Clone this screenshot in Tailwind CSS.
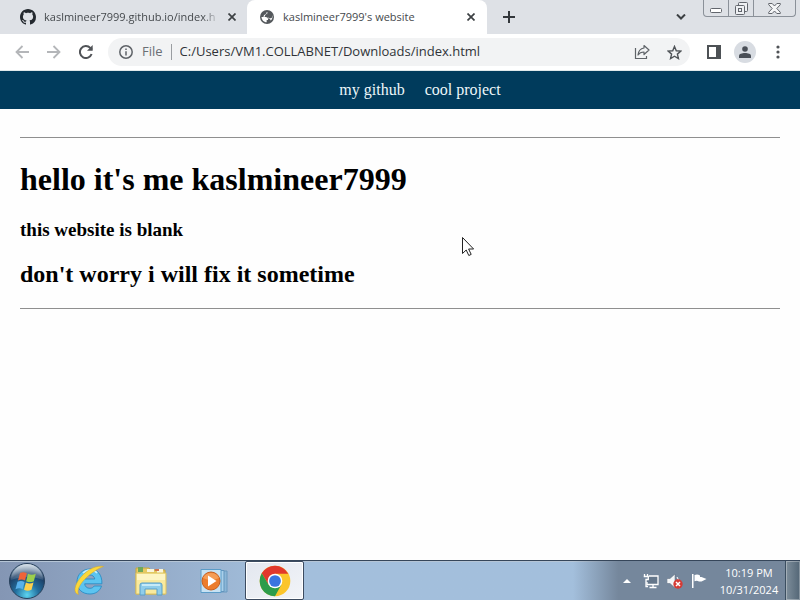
<!DOCTYPE html>
<html lang="en">
<head>
<meta charset="utf-8">
<meta name="viewport" content="width=device-width, initial-scale=1">
<title>kaslmineer7999's website</title>
<script src="https://cdn.jsdelivr.net/npm/@tailwindcss/browser@4"></script>
</head>
<body class="flex h-screen flex-col overflow-hidden bg-[#fefefe] font-['Open_Sans','Noto_Sans',sans-serif]">

<!-- Tab strip -->
<header class="flex h-[34px] shrink-0 bg-[#dee1e6] text-[11px] text-[#45494d]">
  <div class="flex w-[247px] items-center pr-[7px] pl-5">
    <svg class="size-4 shrink-0" viewBox="0 0 16 16" fill="#24292f" aria-hidden="true"><path d="M8 0C3.58 0 0 3.58 0 8c0 3.54 2.29 6.53 5.47 7.59.4.07.55-.17.55-.38 0-.19-.01-.82-.01-1.49-2.01.37-2.53-.49-2.69-.94-.09-.23-.48-.94-.82-1.13-.28-.15-.68-.52-.01-.53.63-.01 1.08.58 1.23.82.72 1.21 1.87.87 2.33.66.07-.52.28-.87.51-1.07-1.78-.2-3.64-.89-3.64-3.95 0-.87.31-1.59.82-2.15-.08-.2-.36-1.02.08-2.12 0 0 .67-.21 2.2.82.64-.18 1.32-.27 2-.27s1.36.09 2 .27c1.53-1.04 2.2-.82 2.2-.82.44 1.1.16 1.92.08 2.12.51.56.82 1.27.82 2.15 0 3.07-1.87 3.75-3.65 3.95.29.25.54.73.54 1.48 0 1.07-.01 1.93-.01 2.2 0 .21.15.46.55.38A8.01 8.01 0 0 0 16 8c0-4.42-3.58-8-8-8z"/></svg>
    <span class="ml-2 w-44 whitespace-nowrap mask-r-from-90% mask-r-to-100%">kaslmineer7999.github.io/index.h</span>
    <button class="ml-1 flex size-4 items-center justify-center" aria-label="Close tab"><svg class="size-2" viewBox="0 0 8 8" stroke="#3c4043" stroke-width="1.7"><path d="M.5.5l7 7M7.5.5l-7 7"/></svg></button>
  </div>
  <div class="flex w-[240px] items-center rounded-t-lg bg-white pr-2 pl-3">
    <svg class="size-4 shrink-0" viewBox="0 0 24 24" aria-hidden="true"><circle cx="12" cy="12" r="10.500" fill="#54585c"/><path d="M13 4.500c-2 .5-3 2-2.500 3.500-2 .3-3.500 1.500-4 3.500l3.500.5c2 .3 3.500 1 3.500 3v1.500h-2v3.500c-4.500-.3-7.500-3.800-7.800-8L8 12M13 4.500c.8 2 2 3.500 3.800 3.300 1 1.500 2.200 2 3.500 2.200.3 3-.8 5.500-2.800 7.300-.5-2.300-2-3.300-4-3.300" fill="#fff"/><path d="M13 4.500c1 2.500 0 4-2 4.500s-2.500 2-1 2.800c1.500.8 3 .2 4.300 1.400 1.500 1.300 3.700 1 5.700-1V8.500L17 4z" fill="#54585c"/></svg>
    <span class="ml-2 grow whitespace-nowrap">kaslmineer7999's website</span>
    <button class="flex size-4 items-center justify-center" aria-label="Close tab"><svg class="size-2" viewBox="0 0 8 8" stroke="#3c4043" stroke-width="1.7"><path d="M.5.5l7 7M7.5.5l-7 7"/></svg></button>
  </div>
  <button class="ml-3 flex w-5 items-center justify-center" aria-label="New tab"><svg class="size-3" viewBox="0 0 12 12" stroke="#33373b" stroke-width="2"><path d="M6 0v12M0 6h12"/></svg></button>
  <button class="ml-auto flex w-5 items-center justify-center" aria-label="Search tabs"><svg class="w-[10px]" viewBox="0 0 10 6" fill="none" stroke="#3c4043" stroke-width="2"><path d="M1 .5l4 4 4-4"/></svg></button>
  <div class="mr-1 ml-3 flex h-[17px] rounded-b border border-t-0 border-[#8b9199]">
    <button class="flex w-6 items-center justify-center pt-1" aria-label="Minimize"><svg class="h-[5px] w-3" viewBox="0 0 12 5" fill="#fff" stroke="#62666d"><rect x=".5" y=".5" width="11" height="4" rx="1"/></svg></button>
    <button class="flex w-[26px] items-center justify-center border-x border-[#8b9199]" aria-label="Restore"><svg class="size-[13px]" viewBox="0 0 13 13" fill="#eef0f3" stroke="#62666d"><rect x="3.500" y=".5" width="9" height="9" rx="1"/><rect x=".5" y="3.500" width="9" height="9" rx="1"/><rect x="3.500" y="6.500" width="3" height="3"/></svg></button>
    <button class="flex w-[41px] items-center justify-center" aria-label="Close window"><svg class="h-[11px] w-[13px]" viewBox="0 0 13 11" fill="#f4f5f7" stroke="#62666d"><path d="M.7.5h3.500L6.500 3 8.800.5h3.500v1.200L8.800 5.500l3.500 3.800v1.200H8.800L6.500 8l-2.300 2.500H.7V9.300l3.500-3.800L.7 1.700z"/></svg></button>
  </div>
</header>

<!-- Toolbar -->
<div class="flex h-[37px] shrink-0 items-center border-b border-[#dfe8ea] bg-white pr-3 pl-3 text-[#5f6368]">
  <button class="flex size-5 items-center justify-center" aria-label="Back"><svg class="size-[14px]" viewBox="0 0 14 14" fill="none" stroke="#b4b6b9" stroke-width="1.800"><path d="M14 7H1.500M7.500 1l-6 6 6 6"/></svg></button>
  <button class="ml-3 flex size-5 items-center justify-center" aria-label="Forward"><svg class="size-[14px]" viewBox="0 0 14 14" fill="none" stroke="#b4b6b9" stroke-width="1.800"><path d="M0 7h12.500M6.500 1l6 6-6 6"/></svg></button>
  <button class="ml-3 flex size-5 items-center justify-center" aria-label="Reload"><svg class="size-[14px]" viewBox="0 0 14 14" fill="none" stroke="#505357" stroke-width="2"><path d="M12.600 9A6 6 0 1 1 11.300 2.900L13 4.600"/><path d="M13.700 0v5.700H8z" fill="#505357" stroke="none"/></svg></button>
  <div class="ml-3 flex h-7 grow items-center rounded-full bg-[#f2f3f4] pr-[6px] pl-[11px] text-[13px]">
    <svg class="size-[14px] shrink-0" viewBox="0 0 14 14" fill="none" stroke="#5f6368" stroke-width="1.500" aria-hidden="true"><circle cx="7" cy="7" r="6.200"/><path d="M7 6.200v4.300M7 3.500v1.600"/></svg>
    <span class="ml-[9px] text-[#6b6f74]">File</span>
    <span class="mx-2 h-4 w-px bg-[#9a9da1]"></span>
    <input class="min-w-0 grow bg-transparent text-[#303338] outline-none" aria-label="Address" value="C:/Users/VM1.COLLABNET/Downloads/index.html">
    <button class="flex size-5 items-center justify-center" aria-label="Share"><svg class="size-4" viewBox="0 0 16 16" fill="none" stroke="#5f6368" stroke-width="1.200"><path d="M1.500 4v10.500h11V12"/><path d="M10 1.500l5 4.500-5 4.500V8C7.300 8 5.300 9 4 11c.3-3.600 2.500-6.400 6-7z" stroke-linejoin="round"/></svg></button>
    <button class="ml-3 flex size-5 items-center justify-center" aria-label="Bookmark this page"><svg class="size-[15px]" viewBox="0 0 16 16" fill="none" stroke="#505458" stroke-width="1.500"><path d="M8 1.500l1.900 4.600 4.900.4-3.700 3.200 1.100 4.800L8 12l-4.200 2.500 1.100-4.800L1.200 6.500l4.900-.4z"/></svg></button>
  </div>
  <button class="ml-3 flex size-6 items-center justify-center" aria-label="Side panel"><svg class="size-[14px]" viewBox="0 0 14 14" fill="none" stroke="#4d5155" stroke-width="2"><path d="M1 1h12v12H1z"/><path d="M10 1h3v12h-3z" fill="#4d5155"/></svg></button>
  <button class="ml-2 flex size-[22px] items-center justify-center rounded-full bg-[#d8dce2]" aria-label="Profile"><svg class="size-3" viewBox="0 0 12 12" fill="#4a4f57"><circle cx="6" cy="3" r="2.800"/><path d="M0 12V9.800C0 8 3 7 6 7s6 1 6 2.800V12z"/></svg></button>
  <button class="ml-3 flex w-5 items-center justify-center" aria-label="Menu"><svg class="h-[14px] w-1" viewBox="0 0 4 14" fill="#505357"><circle cx="2" cy="2" r="1.600"/><circle cx="2" cy="7" r="1.600"/><circle cx="2" cy="12" r="1.600"/></svg></button>
</div>

<!-- Web page -->
<main class="grow font-['Liberation_Serif',serif] text-black">
  <nav class="flex h-[38px] items-center justify-center gap-5 bg-[#003b5c] pl-10 text-base text-[#edf7fa]">
    <a href="#">my github</a>
    <a href="#">cool project</a>
  </nav>
  <div class="px-5 pt-7">
    <hr class="border-[#8f8f8f]">
    <h1 class="mt-[22px] text-[32px]/[38px] font-bold">hello it's me kaslmineer7999</h1>
    <h3 class="mt-5 text-[19px]/[24px] font-bold">this website is blank</h3>
    <h2 class="mt-[18px] text-2xl/[28px] font-bold">don't worry i will fix it sometime</h2>
    <hr class="mt-5 border-[#8f8f8f]">
  </div>
</main>

<!-- Mouse pointer -->
<svg class="absolute top-[236px] left-[461px] h-[21px] w-[14px]" viewBox="0 0 14 21" fill="#fff" stroke="#222" aria-hidden="true"><path d="M1.500 1.500v16l3.700-3.500 2.600 5.500 2.400-1.100-2.600-5.400h5z"/></svg>

<!-- Taskbar -->
<footer class="flex h-10 shrink-0 border-t border-[#36465a] bg-linear-to-r from-[#8496b4] via-[#a3bfdc] via-35% to-[#a3bfdc] inset-shadow-[0_1px_0_#b5c5d6]">
  <button class="flex w-[54px] items-center justify-center" aria-label="Start">
    <svg class="size-[38px]" viewBox="0 0 38 38">
      <defs>
        <radialGradient id="orb" cx=".5" cy=".9" r=".85"><stop offset="0" stop-color="#5cd4f0"/><stop offset=".4" stop-color="#226e9d"/><stop offset=".75" stop-color="#1d3f66"/><stop offset="1" stop-color="#8fa9c0"/></radialGradient>
        <linearGradient id="gloss" x2="0" y2="1"><stop stop-color="#fff" stop-opacity=".6"/><stop offset="1" stop-color="#fff" stop-opacity=".1"/></linearGradient>
      </defs>
      <circle cx="19" cy="19" r="17.500" fill="url(#orb)" stroke="#28415c"/>
      <path d="M3 18a16 16 0 0 1 32 0c-9-4-21-4-32 0z" fill="url(#gloss)"/>
      <path d="M12 11c2.500-1.300 4.500-1 6.800.2L17 18.500c-2.400-1.200-4.400-1.300-7 0z" fill="#ee6439"/>
      <path d="M20 11.800c2.500 1.300 5 1.300 7.800 0l-2 7.400c-2.600 1.200-5 1.200-7.600 0z" fill="#9bcf4c"/>
      <path d="M9.500 19.800c2.500-1.200 4.600-1.100 7.100.1l-1.900 7.300c-2.500-1.300-4.600-1.200-7.200 0z" fill="#58b1ec"/>
      <path d="M17.900 20.500c2.600 1.300 5 1.200 7.600 0l-2 7.300c-2.600 1.200-5 1.200-7.500 0z" fill="#fed04c"/>
    </svg>
  </button>
  <button class="ml-1 flex w-[62px] items-center justify-center" aria-label="Internet Explorer">
    <svg class="size-8" viewBox="0 0 32 32" fill="none">
      <path fill="#5cc4f0" stroke="#2288c2" stroke-width=".8" fill-rule="evenodd" d="M17 4C9.500 4 4 9.500 4 17s5.500 12 13 12c5.500 0 10-3 11.500-8h-7.300c-1 1.600-2.400 2.300-4.300 2.300-3 0-5-1.700-5.200-4.500h17.200C29.300 10 24.500 4 17 4zm-5.200 10c.6-2.500 2.400-4 5-4s4.600 1.500 5 4z"/>
      <path d="M10 8c4-4 11-4 14 0" stroke="#c4edff" stroke-width="1.500"/>
      <path d="M5.500 29.500C0 28 1 20 8 12S24 0 30.500 1.500C26 3 17.500 8 11.500 14.500S4 26 5.500 29.500z" fill="#fbd83b" stroke="#d9a722" stroke-width=".5"/>
    </svg>
  </button>
  <button class="flex w-[62px] items-center justify-center" aria-label="Windows Explorer">
    <svg class="size-8" viewBox="0 0 32 32">
      <path d="M1 3h13l2 2h14v24H1z" fill="#e8cb62" stroke="#c6a642"/>
      <path d="M3 2h5v5H3z" fill="#6ea85a"/><path d="M12 4h7v3h-7zM22 4h6v4h-6z" fill="#faf6dc"/><path d="M20 4h4v2h-4z" fill="#cf7450"/>
      <path d="M1 8h30v21H1z" fill="#f9ea9e" stroke="#dcc363"/><path d="M2 9h28v6H2z" fill="#fdf5c4"/>
      <path d="M5 30V20q0-2 2-2h18q2 0 2 2v10h-5v-6H10v6z" fill="#8fcdea" stroke="#5a9fc8"/>
      <path d="M7 20h18" stroke="#d8f3fc" stroke-width="1.500"/>
    </svg>
  </button>
  <button class="flex w-[63px] items-center justify-center" aria-label="Windows Media Player">
    <svg class="h-6 w-7" viewBox="0 0 28 24">
      <path d="M7 2h20v21H7z" fill="#8bb6d7" stroke="#6a9abf"/><path d="M5 1.500h19v21H5z" fill="#a9d0ea" stroke="#6395bd"/>
      <path d="M1 .5h20v23H1z" fill="#c7e2f3" stroke="#5b9cc8"/>
      <circle cx="11" cy="12" r="9" fill="#ec7c2c" stroke="#c65f1f"/><path d="M3 9a9 9 0 0 1 16 0q-8 4-16 0z" fill="#f9ab68" opacity=".7"/>
      <path d="M8 6.500l8.500 5.500L8 17.500z" fill="#fff"/>
    </svg>
  </button>
  <button class="flex w-[59px] items-center justify-center rounded-xs border border-[#3c4b60] bg-linear-to-br from-[#e3e7ef] to-[#f2f4f8] inset-ring inset-ring-white" aria-label="Google Chrome">
    <svg class="size-8" viewBox="0 0 48 48">
      <circle cx="24" cy="24" r="23" fill="#fbc52c"/>
      <path d="M24 13h19.900A23 23 0 0 0 4.100 12.500l10.400 17z" fill="#e2382c"/>
      <path d="M4.100 12.500A23 23 0 0 0 24 47l9.500-17.500-19 0z" fill="#2d9c4b"/>
      <circle cx="24" cy="24" r="11" fill="#fff"/><circle cx="24" cy="24" r="8.800" fill="#3974e0"/>
    </svg>
  </button>
  <div class="ml-auto flex items-center bg-linear-to-r from-transparent to-[#75879c] to-20% pl-[46px] text-white">
    <button class="flex size-4 items-center justify-center" aria-label="Show hidden icons"><svg class="h-1 w-2" viewBox="0 0 8 4" fill="#fff"><path d="M4 0l4 4H0z"/></svg></button>
    <button class="ml-2 flex size-4 items-center justify-center" aria-label="Network"><svg class="size-4" viewBox="0 0 16 16" fill="none" stroke="#fff" stroke-width="1.300"><path d="M6 3h9v8.500H4V9" fill="#65778b"/><path d="M6.500 14.500h7M10 12v2.500M1.500 1v3M4.500 1v3M.7 3.500h4.600v3H3v7h2"/></svg></button>
    <button class="ml-2 flex size-4 items-center justify-center" aria-label="Volume muted"><svg class="size-4" viewBox="0 0 16 16"><path d="M0 5.500h3L8 1v14l-5-4.500H0z" fill="#f4f6f8" stroke="#58677a" stroke-width=".5"/><path d="M10 4q3 3 1 8" fill="none" stroke="#fff"/><circle cx="11" cy="11" r="4.700" fill="#d63b35"/><path d="M9 9l4 4M13 9l-4 4" stroke="#fff" stroke-width="1.500"/></svg></button>
    <button class="ml-2 flex size-4 items-center justify-center" aria-label="Action Center"><svg class="size-4" viewBox="0 0 16 16" fill="#fff"><path d="M1 1h1.500v14H1zM3.500 2c2-.8 3.700-.8 5.500.5v1.500h1.500L15.500 6l-5 2.500H8c-1.600-1-3-.9-4.500-.2z"/></svg></button>
    <time class="ml-3 w-[60px] text-center text-[11px]/[17px] whitespace-nowrap" datetime="2024-10-31T22:19">10:19 PM<br>10/31/2024</time>
    <button class="ml-[6px] h-full w-[15px] border-l border-[#3b4e60] bg-linear-to-r from-[#7e8e9b] to-[#536676] inset-ring inset-ring-white/30" aria-label="Show desktop"></button>
  </div>
</footer>
</body>
</html>
